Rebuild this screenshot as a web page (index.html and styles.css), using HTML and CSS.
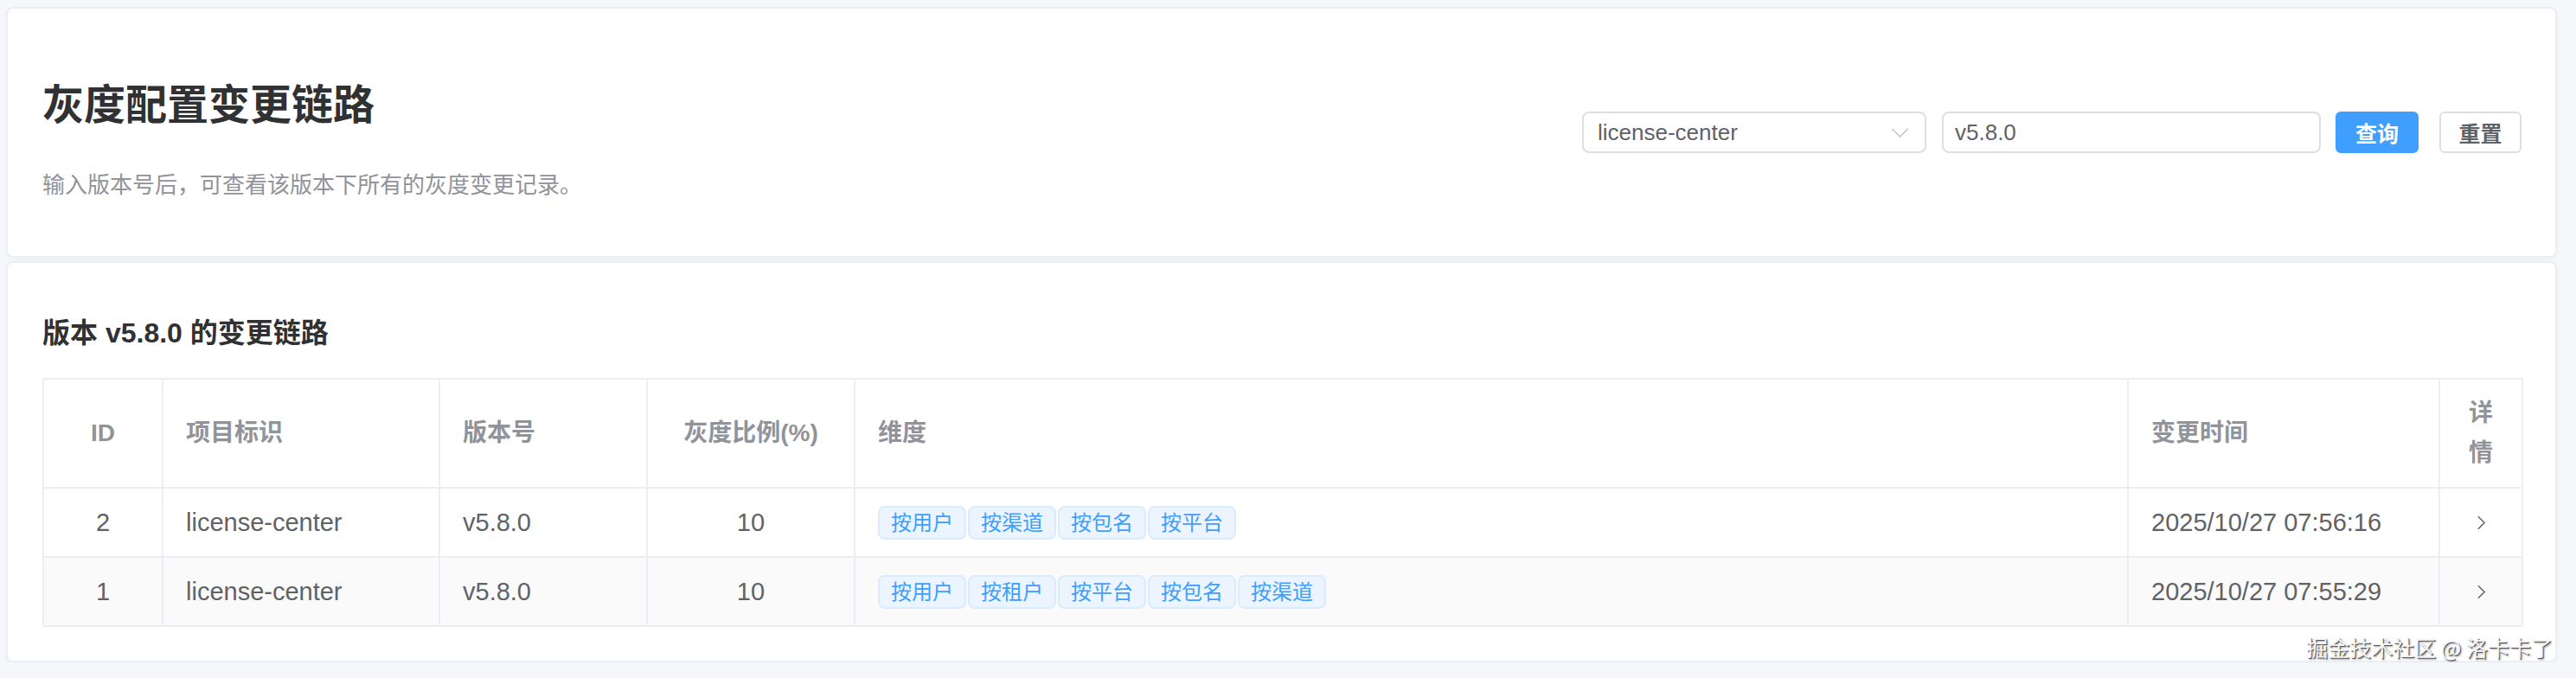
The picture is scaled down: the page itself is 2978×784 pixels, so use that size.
FILE: index.html
```html
<!DOCTYPE html>
<html lang="zh-CN">

<head>
    <meta charset="UTF-8">
    <title>灰度配置变更链路</title>
    <link rel="stylesheet" href="styles.css">
</head>

<body>
    <div class="page">
        <div class="card header-card">
            <div class="intro">
                <h1>灰度配置变更链路</h1>
                <p class="intro-desc">输入版本号后，可查看该版本下所有的灰度变更记录。</p>
            </div>

            <div class="filters">
                <div class="select">
                    <span>license-center</span>
                    <svg class="select-arrow" viewBox="0 0 22 12" fill="none" stroke="currentColor" stroke-width="1.6">
                        <path d="M1 1l10 10L21 1" />
                    </svg>
                </div>
                <div class="input">v5.8.0</div>
                <button class="btn btn-primary">查询</button>
                <button class="btn">重置</button>
            </div>
        </div>

        <div class="card list-card">
            <h2>版本 v5.8.0 的变更链路</h2>

            <table class="chain-table">
                <colgroup>
                    <col style="width: 138px">
                    <col style="width: 320px">
                    <col style="width: 240px">
                    <col style="width: 240px">
                    <col style="width: 1472px">
                    <col style="width: 360px">
                    <col style="width: 96px">
                </colgroup>
                <thead>
                    <tr>
                        <th class="center">ID</th>
                        <th>项目标识</th>
                        <th>版本号</th>
                        <th class="center">灰度比例(%)</th>
                        <th>维度</th>
                        <th>变更时间</th>
                        <th class="center">详情</th>
                    </tr>
                </thead>
                <tbody>
                    <tr>
                        <td class="center">2</td>
                        <td>license-center</td>
                        <td>v5.8.0</td>
                        <td class="center">10</td>
                        <td>
                            <div class="tags">
                                <span class="tag">按用户</span>
                                <span class="tag">按渠道</span>
                                <span class="tag">按包名</span>
                                <span class="tag">按平台</span>
                            </div>
                        </td>
                        <td>2025/10/27 07:56:16</td>
                        <td class="detail-cell">
                            <svg class="row-arrow" viewBox="0 0 12 18" fill="none" stroke="currentColor" stroke-width="1.6">
                                <path d="M2 1l8 8-8 8" />
                            </svg>
                        </td>
                    </tr>
                    <tr class="striped">
                        <td class="center">1</td>
                        <td>license-center</td>
                        <td>v5.8.0</td>
                        <td class="center">10</td>
                        <td>
                            <div class="tags">
                                <span class="tag">按用户</span>
                                <span class="tag">按租户</span>
                                <span class="tag">按平台</span>
                                <span class="tag">按包名</span>
                                <span class="tag">按渠道</span>
                            </div>
                        </td>
                        <td>2025/10/27 07:55:29</td>
                        <td class="detail-cell">
                            <svg class="row-arrow" viewBox="0 0 12 18" fill="none" stroke="currentColor" stroke-width="1.6">
                                <path d="M2 1l8 8-8 8" />
                            </svg>
                        </td>
                    </tr>
                </tbody>
            </table>

            <span class="watermark">掘金技术社区 @ 洛卡卡了</span>
        </div>
    </div>
</body>

</html>
```

FILE: styles.css
```css
:root {
    --primary: #409EFF;
    --background: #F5F7FA;
    --card-bg: #FFFFFF;
    --border-color: #EBEEF5;
    --input-border: #DCDFE6;
    --text-main: #303133;
    --text-regular: #606266;
    --text-secondary: #909399;
    --text-placeholder: #C0C4CC;
}

* {
    box-sizing: border-box;
}

body {
    margin: 0;
    background-color: var(--background);
    font-family: "Liberation Sans", "Noto Sans CJK SC", sans-serif;
    color: var(--text-regular);
}

.page {
    display: flex;
    flex-direction: column;
    gap: 4px;
    padding: 8px 22px 0 7px;
}

.card {
    background-color: var(--card-bg);
    border: 2px solid var(--border-color);
    border-radius: 8px;
    box-shadow: 0 2px 6px rgba(0, 0, 0, 0.03);
}

/* En-tête */
.header-card {
    display: flex;
    align-items: center;
    justify-content: space-between;
    min-height: 290px;
    padding: 0 39px 0 40px;
}

.intro {
    padding-top: 20px;
}

.intro h1 {
    margin: 0 0 42px;
    font-size: 48px;
    line-height: 60px;
    font-weight: 700;
    color: var(--text-main);
}

.intro-desc {
    margin: 0;
    font-size: 26px;
    line-height: 40px;
    color: var(--text-secondary);
}

.filters {
    display: flex;
    align-items: center;
}

.select,
.input {
    display: flex;
    align-items: center;
    height: 48px;
    padding: 0 16px;
    border: 2px solid var(--input-border);
    border-radius: 8px;
    font-size: 26px;
    color: var(--text-regular);
}

.select {
    width: 398px;
    justify-content: space-between;
    padding-right: 18px;
}

.select-arrow {
    width: 21px;
    height: 11px;
    color: var(--text-placeholder);
}

.input {
    width: 438px;
    margin-left: 18px;
    padding-left: 13px;
}

.btn {
    height: 48px;
    width: 95px;
    padding: 0;
    border: 2px solid var(--input-border);
    border-radius: 6px;
    background-color: #fff;
    font-family: inherit;
    font-size: 25px;
    font-weight: 700;
    color: var(--text-regular);
    margin-left: 24px;
}

.btn-primary {
    width: 96px;
    margin-left: 17px;
    background-color: var(--primary);
    border-color: var(--primary);
    color: #fff;
}

/* Liste */
.list-card {
    position: relative;
    padding: 59px 39px 39px 40px;
}

.list-card h2 {
    margin: 0 0 30px;
    font-size: 32px;
    line-height: 44px;
    font-weight: 700;
    color: var(--text-main);
}

.chain-table {
    width: 100%;
    table-layout: fixed;
    border-collapse: collapse;
}

.chain-table th,
.chain-table td {
    border: 2px solid var(--border-color);
    padding: 16px 26px;
    line-height: 46px;
    text-align: left;
    vertical-align: middle;
}

.chain-table th {
    font-size: 28px;
    font-weight: 700;
    color: var(--text-secondary);
}

.chain-table td {
    font-size: 29px;
    color: var(--text-regular);
}

.chain-table .center {
    text-align: center;
}

.chain-table .detail-cell {
    padding: 16px 0;
}

.striped td {
    background-color: #FAFAFA;
}

.tags {
    display: flex;
    gap: 2px;
}

.tag {
    display: inline-block;
    height: 39px;
    padding: 0 13px;
    line-height: 35px;
    font-size: 24px;
    color: var(--primary);
    background-color: #ECF5FF;
    border: 2px solid #D9ECFF;
    border-radius: 8px;
}

.row-arrow {
    display: block;
    margin: 0 auto;
    width: 11px;
    height: 17px;
    color: var(--text-regular);
}

/* Filigrane */
.watermark {
    position: absolute;
    right: 3px;
    bottom: 1px;
    font-family: "Noto Sans CJK SC", sans-serif;
    font-size: 25px;
    line-height: 30px;
    color: #F4F4F4;
    text-shadow: 1px 1px 0 #555, 2px 2px 2px rgba(0, 0, 0, 0.35);
}
```
